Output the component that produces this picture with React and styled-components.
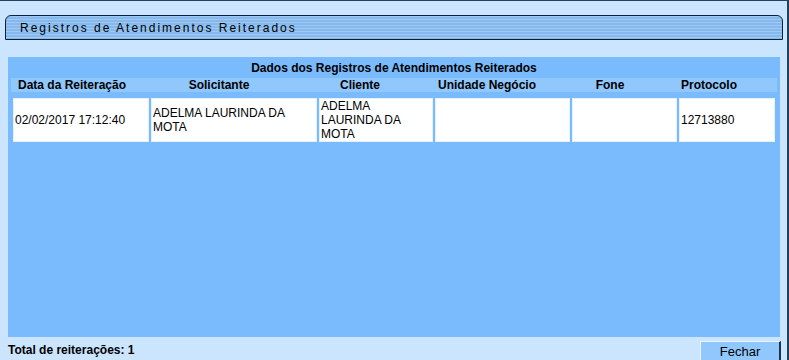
import React from "react";
import styled, { createGlobalStyle } from "styled-components";

const GlobalStyle = createGlobalStyle`
  body {
    margin: 0;
    font-family: "Liberation Sans", Arial, sans-serif;
    font-size: 12px;
    color: #000;
  }
`;

const Frame = styled.div`
  width: 789px;
  height: 360px;
  box-sizing: border-box;
  border-top: 1px solid #23405f;
  border-right: 2px solid #23405f;
  background: #cbe5fe;
  display: flex;
  flex-direction: column;
  overflow: hidden;
  & > * {
    flex-shrink: 0;
  }
`;

const TitleBar = styled.div`
  margin: 14px 4px 0 5px;
  height: 25px;
  box-sizing: border-box;
  border: 1px solid #0d2038;
  border-radius: 6px 6px 0 0;
  background: repeating-linear-gradient(
    180deg,
    #9fc9f2 0px,
    #9fc9f2 1px,
    #85b9ee 1px,
    #85b9ee 3px
  );
  display: flex;
  align-items: center;
  padding-left: 14px;
  font-size: 12px;
  letter-spacing: 2px;
`;

const Panel = styled.div`
  margin: 17px 7px 0 8px;
  height: 280px;
  background: #79bbfd;
  padding: 0 3px;
  display: flex;
  flex-direction: column;
`;

const Caption = styled.div`
  height: 21px;
  line-height: 22px;
  text-align: center;
  font-weight: bold;
`;

const HeadRow = styled.div`
  display: grid;
  grid-template-columns: 122px 172px 110px 144px 102px 96px 1fr;
  height: 14px;
  line-height: 14px;
  background: #90c7fc;
  font-weight: bold;
`;

const HeadCell = styled.div`
  text-align: center;
  white-space: nowrap;
`;

const DataGrid = styled.div`
  margin-top: 4px;
  display: grid;
  grid-template-columns: 136px 166px 114px 135px 105px 96px;
  gap: 2px;
  padding: 2px;
`;

const DataCell = styled.div`
  background: #fff;
  height: 44px;
  box-sizing: border-box;
  padding: 0 2px;
  display: flex;
  align-items: center;
  line-height: 14px;
  box-shadow: inset 0 0 0 1px #e4f1fe;
`;

const Footer = styled.div`
  display: flex;
  justify-content: space-between;
  align-items: flex-start;
  padding: 0 6px 0 8px;
`;

const Total = styled.div`
  margin-top: 6px;
  font-weight: bold;
  line-height: 14px;
`;

const Button = styled.button`
  margin-top: 4px;
  width: 81px;
  height: 22px;
  box-sizing: border-box;
  background: #90c7fc;
  border-style: solid;
  border-width: 1px 2px 2px 1px;
  border-color: #eaf4ff #1c3350 #1c3350 #eaf4ff;
  font-family: "Liberation Sans", Arial, sans-serif;
  font-size: 13px;
  color: #000;
  padding: 0;
`;

const headers = [
  "Data da Reiteração",
  "Solicitante",
  "Cliente",
  "Unidade Negócio",
  "Fone",
  "Protocolo",
  "",
];

const row = [
  "02/02/2017 17:12:40",
  "ADELMA LAURINDA DA MOTA",
  "ADELMA LAURINDA DA MOTA",
  "",
  "",
  "12713880",
];

export default function App() {
  return (
    <>
      <GlobalStyle />
      <Frame>
        <TitleBar>Registros de Atendimentos Reiterados</TitleBar>
        <Panel>
          <Caption>Dados dos Registros de Atendimentos Reiterados</Caption>
          <HeadRow>
            {headers.map((h, i) => (
              <HeadCell key={i}>{h}</HeadCell>
            ))}
          </HeadRow>
          <DataGrid>
            {row.map((v, i) => (
              <DataCell key={i}>{v}</DataCell>
            ))}
          </DataGrid>
        </Panel>
        <Footer>
          <Total>Total de reiterações: 1</Total>
          <Button>Fechar</Button>
        </Footer>
      </Frame>
    </>
  );
}
